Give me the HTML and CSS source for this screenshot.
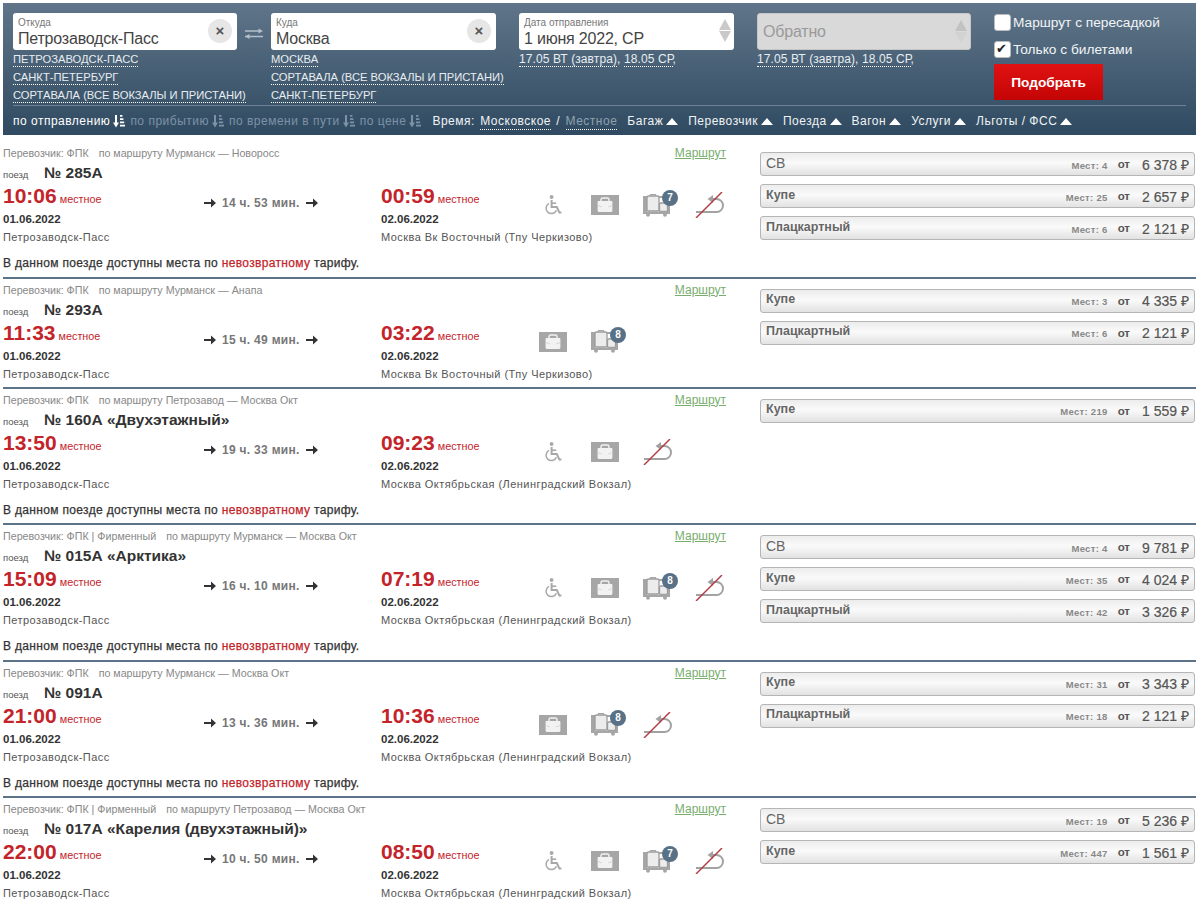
FILE: index.html
```html
<!DOCTYPE html>
<html lang="ru">
<head>
<meta charset="utf-8">
<title>Поезда</title>
<link rel="stylesheet" href="styles.css">
</head>
<body>
<svg class="defs" xmlns="http://www.w3.org/2000/svg">
  <symbol id="i-sort" viewBox="0 0 12 14"><path d="M3 1v9" stroke="currentColor" stroke-width="2" fill="none"/><path d="M0 8.600h6L3 13.400z" fill="currentColor"/><path d="M7 1h2.400v1.800H7zM7 4.200h3.400V6H7zM7 7.400h4.200v1.800H7zM7 10.800h5v1.800H7z" fill="currentColor"/></symbol>
  <symbol id="i-wheel" viewBox="0 0 18 20"><circle cx="7.600" cy="2" r="1.900" fill="#a8a8a8"/><path d="M7.600 5v7h5.200l2.600 5.600h2" fill="none" stroke="#a8a8a8" stroke-width="2"/><path d="M7.600 8.200h4.600" stroke="#a8a8a8" stroke-width="1.600"/><path d="M5 8.400a5.400 5.400 0 1 0 7.400 7" fill="none" stroke="#a8a8a8" stroke-width="1.500"/></symbol>
  <symbol id="i-bag" viewBox="0 0 28 20"><path d="M0 0h28v20H0z" fill="#a6a6a6"/><path d="M10 6V4.600C10 3.600 10.800 3 11.800 3h4.400c1 0 1.800.6 1.800 1.600V6" fill="none" stroke="#f2f2f2" stroke-width="1.400"/><path d="M6.600 7c0-.6.4-1 1-1h12.800c.6 0 1 .4 1 1v8.600c0 .8-.5 1.400-1.200 1.400H7.800c-.7 0-1.200-.6-1.200-1.400z" fill="#f2f2f2"/><path d="M7 10.600 10.800 12M21 10.600 17.200 12" stroke="#cfcfcf" stroke-width=".8"/></symbol>
  <symbol id="i-lug" viewBox="0 0 28 23"><rect x="0" y="2" width="4" height="16" fill="#a6a6a6"/><rect x="24" y="6" width="3" height="12" fill="#a6a6a6"/><rect x="0" y="2" width="20" height="2" fill="#a6a6a6"/><rect x="4" y="2" width="12" height="15" rx="1.500" fill="#ececec" stroke="#9c9c9c" stroke-width="1.300"/><path d="M7.500 2V0.600h5V2" fill="none" stroke="#a6a6a6" stroke-width="1.200"/><rect x="16.500" y="9" width="8" height="8.500" rx="1.200" fill="#ececec" stroke="#9c9c9c" stroke-width="1.300"/><rect x="0" y="17.500" width="27" height="2.500" fill="#a6a6a6"/><circle cx="5" cy="20.800" r="2" fill="#a6a6a6"/><circle cx="22" cy="20.800" r="2" fill="#a6a6a6"/></symbol>
  <symbol id="i-hook" viewBox="-2 0 30 26"><path d="M0 20h20.500a6.500 6.500 0 0 0 0-13h-5" fill="none" stroke="#a2a2a2" stroke-width="2"/><path d="M17 3 11.500 7l5.500 4z" fill="#a2a2a2"/><path d="M0 26 26 0" stroke="#b23a42" stroke-width="1.400"/></symbol>
  <symbol id="i-arrow" viewBox="0 0 12 10"><path d="M0 4h7V0.600L12 5 7 9.400V6H0z" fill="#333"/></symbol>
</svg>

<header class="search">
  <div class="fields">
    <div class="field field-from">
      <div class="input"><span class="input-label">Откуда</span><span class="input-value">Петрозаводск-Пасс</span><span class="clear">×</span></div>
      <a class="quick">ПЕТРОЗАВОДСК-ПАСС</a>
      <a class="quick">САНКТ-ПЕТЕРБУРГ</a>
      <a class="quick">СОРТАВАЛА (ВСЕ ВОКЗАЛЫ И ПРИСТАНИ)</a>
    </div>
    <svg class="swap" viewBox="0 0 18 11" width="18" height="11"><path d="M0 3h14M0 8.500h18" stroke="#b4c0ca" stroke-width="1.500" fill="none"/><path d="M13.500 0.500 18 3l-4.500 2.500zM4.500 6 0 8.500 4.500 11z" fill="#b4c0ca"/></svg>
    <div class="field field-to">
      <div class="input"><span class="input-label">Куда</span><span class="input-value">Москва</span><span class="clear">×</span></div>
      <a class="quick">МОСКВА</a>
      <a class="quick">СОРТАВАЛА (ВСЕ ВОКЗАЛЫ И ПРИСТАНИ)</a>
      <a class="quick">САНКТ-ПЕТЕРБУРГ</a>
    </div>
    <div class="field field-date">
      <div class="input"><span class="input-label">Дата отправления</span><span class="input-value">1 июня 2022, СР</span><span class="spin"><i class="up"></i><i class="down"></i></span></div>
      <div class="quick-dates"><a>17.05 ВТ (завтра)</a>, <a>18.05 СР</a>,</div>
    </div>
    <div class="field field-back">
      <div class="input input-off"><span class="input-value">Обратно</span><span class="spin spin-off"><i class="up"></i><i class="down"></i></span></div>
      <div class="quick-dates"><a>17.05 ВТ (завтра)</a>, <a>18.05 СР</a>,</div>
    </div>
    <div class="options">
      <label class="check"><input type="checkbox">Маршрут с пересадкой</label>
      <label class="check"><input type="checkbox" checked>Только с билетами</label>
      <button class="submit" type="button">Подобрать</button>
    </div>
  </div>
  <nav class="filters">
    <span class="sort on">по отправлению<svg width="12" height="14"><use href="#i-sort"/></svg></span>
    <span class="sort">по прибытию<svg width="12" height="14"><use href="#i-sort"/></svg></span>
    <span class="sort">по времени в пути<svg width="12" height="14"><use href="#i-sort"/></svg></span>
    <span class="sort">по цене<svg width="12" height="14"><use href="#i-sort"/></svg></span>
    <span class="tz">Время: <a class="tz-on">Московское</a> / <a class="tz-off">Местное</a></span>
    <span class="drop">Багаж<i></i></span>
    <span class="drop">Перевозчик<i></i></span>
    <span class="drop">Поезда<i></i></span>
    <span class="drop">Вагон<i></i></span>
    <span class="drop">Услуги<i></i></span>
    <span class="drop">Льготы / ФСС<i></i></span>
  </nav>
</header>

<main class="trains">

  <article class="train">
    <div class="info">
      <div class="carrier"><span>Перевозчик: ФПК<span class="via">по маршруту Мурманск — Новоросс</span></span><a class="route">Маршрут</a></div>
      <div class="num"><small>поезд</small><b>№ 285А</b></div>
      <div class="times">
        <div><div class="time">10:06<small>местное</small></div><div class="date">01.06.2022</div><div class="station">Петрозаводск-Пасс</div></div>
        <div class="dur"><svg width="12" height="10"><use href="#i-arrow"/></svg><span>14 ч. 53 мин.</span><svg width="12" height="10"><use href="#i-arrow"/></svg></div>
        <div><div class="time">00:59<small>местное</small></div><div class="date">02.06.2022</div><div class="station">Москва Вк Восточный (Тпу Черкизово)</div></div>
        <div class="icons">
          <span class="slot"><svg width="18" height="20"><use href="#i-wheel"/></svg></span>
          <span class="slot"><svg width="28" height="20"><use href="#i-bag"/></svg></span>
          <span class="slot"><svg width="28" height="23"><use href="#i-lug"/></svg><em class="badge">7</em></span>
          <span class="slot"><svg width="30" height="26"><use href="#i-hook"/></svg></span>
        </div>
      </div>
      <p class="note">В данном поезде доступны места по <span>невозвратному</span> тарифу.</p>
    </div>
    <div class="tickets">
      <div class="ticket"><span class="cls cls-thin">СВ</span><span class="seats">Мест: 4</span><span class="from">от</span><span class="price">6 378 ₽</span></div>
      <div class="ticket"><span class="cls">Купе</span><span class="seats">Мест: 25</span><span class="from">от</span><span class="price">2 657 ₽</span></div>
      <div class="ticket"><span class="cls">Плацкартный</span><span class="seats">Мест: 6</span><span class="from">от</span><span class="price">2 121 ₽</span></div>
    </div>
  </article>

  <article class="train">
    <div class="info">
      <div class="carrier"><span>Перевозчик: ФПК<span class="via">по маршруту Мурманск — Анапа</span></span><a class="route">Маршрут</a></div>
      <div class="num"><small>поезд</small><b>№ 293А</b></div>
      <div class="times">
        <div><div class="time">11:33<small>местное</small></div><div class="date">01.06.2022</div><div class="station">Петрозаводск-Пасс</div></div>
        <div class="dur"><svg width="12" height="10"><use href="#i-arrow"/></svg><span>15 ч. 49 мин.</span><svg width="12" height="10"><use href="#i-arrow"/></svg></div>
        <div><div class="time">03:22<small>местное</small></div><div class="date">02.06.2022</div><div class="station">Москва Вк Восточный (Тпу Черкизово)</div></div>
        <div class="icons">
          <span class="slot"><svg width="28" height="20"><use href="#i-bag"/></svg></span>
          <span class="slot"><svg width="28" height="23"><use href="#i-lug"/></svg><em class="badge">8</em></span>
        </div>
      </div>
    </div>
    <div class="tickets">
      <div class="ticket"><span class="cls">Купе</span><span class="seats">Мест: 3</span><span class="from">от</span><span class="price">4 335 ₽</span></div>
      <div class="ticket"><span class="cls">Плацкартный</span><span class="seats">Мест: 6</span><span class="from">от</span><span class="price">2 121 ₽</span></div>
    </div>
  </article>

  <article class="train">
    <div class="info">
      <div class="carrier"><span>Перевозчик: ФПК<span class="via">по маршруту Петрозавод — Москва Окт</span></span><a class="route">Маршрут</a></div>
      <div class="num"><small>поезд</small><b>№ 160А «Двухэтажный»</b></div>
      <div class="times">
        <div><div class="time">13:50<small>местное</small></div><div class="date">01.06.2022</div><div class="station">Петрозаводск-Пасс</div></div>
        <div class="dur"><svg width="12" height="10"><use href="#i-arrow"/></svg><span>19 ч. 33 мин.</span><svg width="12" height="10"><use href="#i-arrow"/></svg></div>
        <div><div class="time">09:23<small>местное</small></div><div class="date">02.06.2022</div><div class="station">Москва Октябрьская (Ленинградский Вокзал)</div></div>
        <div class="icons">
          <span class="slot"><svg width="18" height="20"><use href="#i-wheel"/></svg></span>
          <span class="slot"><svg width="28" height="20"><use href="#i-bag"/></svg></span>
          <span class="slot"><svg width="30" height="26"><use href="#i-hook"/></svg></span>
        </div>
      </div>
      <p class="note">В данном поезде доступны места по <span>невозвратному</span> тарифу.</p>
    </div>
    <div class="tickets">
      <div class="ticket"><span class="cls">Купе</span><span class="seats">Мест: 219</span><span class="from">от</span><span class="price">1 559 ₽</span></div>
    </div>
  </article>

  <article class="train">
    <div class="info">
      <div class="carrier"><span>Перевозчик: ФПК | Фирменный<span class="via">по маршруту Мурманск — Москва Окт</span></span><a class="route">Маршрут</a></div>
      <div class="num"><small>поезд</small><b>№ 015А «Арктика»</b></div>
      <div class="times">
        <div><div class="time">15:09<small>местное</small></div><div class="date">01.06.2022</div><div class="station">Петрозаводск-Пасс</div></div>
        <div class="dur"><svg width="12" height="10"><use href="#i-arrow"/></svg><span>16 ч. 10 мин.</span><svg width="12" height="10"><use href="#i-arrow"/></svg></div>
        <div><div class="time">07:19<small>местное</small></div><div class="date">02.06.2022</div><div class="station">Москва Октябрьская (Ленинградский Вокзал)</div></div>
        <div class="icons">
          <span class="slot"><svg width="18" height="20"><use href="#i-wheel"/></svg></span>
          <span class="slot"><svg width="28" height="20"><use href="#i-bag"/></svg></span>
          <span class="slot"><svg width="28" height="23"><use href="#i-lug"/></svg><em class="badge">8</em></span>
          <span class="slot"><svg width="30" height="26"><use href="#i-hook"/></svg></span>
        </div>
      </div>
      <p class="note">В данном поезде доступны места по <span>невозвратному</span> тарифу.</p>
    </div>
    <div class="tickets">
      <div class="ticket"><span class="cls cls-thin">СВ</span><span class="seats">Мест: 4</span><span class="from">от</span><span class="price">9 781 ₽</span></div>
      <div class="ticket"><span class="cls">Купе</span><span class="seats">Мест: 35</span><span class="from">от</span><span class="price">4 024 ₽</span></div>
      <div class="ticket"><span class="cls">Плацкартный</span><span class="seats">Мест: 42</span><span class="from">от</span><span class="price">3 326 ₽</span></div>
    </div>
  </article>

  <article class="train">
    <div class="info">
      <div class="carrier"><span>Перевозчик: ФПК<span class="via">по маршруту Мурманск — Москва Окт</span></span><a class="route">Маршрут</a></div>
      <div class="num"><small>поезд</small><b>№ 091А</b></div>
      <div class="times">
        <div><div class="time">21:00<small>местное</small></div><div class="date">01.06.2022</div><div class="station">Петрозаводск-Пасс</div></div>
        <div class="dur"><svg width="12" height="10"><use href="#i-arrow"/></svg><span>13 ч. 36 мин.</span><svg width="12" height="10"><use href="#i-arrow"/></svg></div>
        <div><div class="time">10:36<small>местное</small></div><div class="date">02.06.2022</div><div class="station">Москва Октябрьская (Ленинградский Вокзал)</div></div>
        <div class="icons">
          <span class="slot"><svg width="28" height="20"><use href="#i-bag"/></svg></span>
          <span class="slot"><svg width="28" height="23"><use href="#i-lug"/></svg><em class="badge">8</em></span>
          <span class="slot"><svg width="30" height="26"><use href="#i-hook"/></svg></span>
        </div>
      </div>
      <p class="note">В данном поезде доступны места по <span>невозвратному</span> тарифу.</p>
    </div>
    <div class="tickets">
      <div class="ticket"><span class="cls">Купе</span><span class="seats">Мест: 31</span><span class="from">от</span><span class="price">3 343 ₽</span></div>
      <div class="ticket"><span class="cls">Плацкартный</span><span class="seats">Мест: 18</span><span class="from">от</span><span class="price">2 121 ₽</span></div>
    </div>
  </article>

  <article class="train train-last">
    <div class="info">
      <div class="carrier"><span>Перевозчик: ФПК | Фирменный<span class="via">по маршруту Петрозавод — Москва Окт</span></span><a class="route">Маршрут</a></div>
      <div class="num"><small>поезд</small><b>№ 017А «Карелия (двухэтажный)»</b></div>
      <div class="times">
        <div><div class="time">22:00<small>местное</small></div><div class="date">01.06.2022</div><div class="station">Петрозаводск-Пасс</div></div>
        <div class="dur"><svg width="12" height="10"><use href="#i-arrow"/></svg><span>10 ч. 50 мин.</span><svg width="12" height="10"><use href="#i-arrow"/></svg></div>
        <div><div class="time">08:50<small>местное</small></div><div class="date">02.06.2022</div><div class="station">Москва Октябрьская (Ленинградский Вокзал)</div></div>
        <div class="icons">
          <span class="slot"><svg width="18" height="20"><use href="#i-wheel"/></svg></span>
          <span class="slot"><svg width="28" height="20"><use href="#i-bag"/></svg></span>
          <span class="slot"><svg width="28" height="23"><use href="#i-lug"/></svg><em class="badge">7</em></span>
          <span class="slot"><svg width="30" height="26"><use href="#i-hook"/></svg></span>
        </div>
      </div>
    </div>
    <div class="tickets">
      <div class="ticket"><span class="cls cls-thin">СВ</span><span class="seats">Мест: 19</span><span class="from">от</span><span class="price">5 236 ₽</span></div>
      <div class="ticket"><span class="cls">Купе</span><span class="seats">Мест: 447</span><span class="from">от</span><span class="price">1 561 ₽</span></div>
    </div>
  </article>

</main>
</body>
</html>
```

FILE: styles.css
```css
* { box-sizing: border-box; }
html, body { margin: 0; padding: 0; background: #fff; }
body {
  padding: 3px 4px 0 3px;
  font-family: "Liberation Sans", Arial, sans-serif;
  color: #333;
  height: 904px;
  overflow: hidden;
}
.defs { display: none; }

/* search panel */
.search {
  height: 132px;
  padding: 10px 10px 0;
  background: linear-gradient(#607589, #2f4a61);
  color: #fff;
}
.fields { display: flex; height: 93px; border-bottom: 1px solid #6b8093; align-items: flex-start; }
.field-from { width: 224px; }
.field-to { width: 225px; margin-right: 23px; }
.field-date { width: 215px; margin-right: 23px; }
.field-back { width: 214px; margin-right: 23px; }
.swap { margin: 15px 8px 0; flex: none; }
.input {
  position: relative;
  height: 37px;
  background: #fff;
  border-radius: 3px;
  padding: 4px 5px 0;
  color: #444;
}
.input-label { display: block; font-size: 10px; line-height: 12px; color: #777; }
.input-value { display: block; font-size: 16px; line-height: 19px; letter-spacing: -.2px; }
.input-off { background: #d9d9d9; padding-top: 8px; border: 1px solid #c6c6c6; }
.input-off .input-value { color: #999; }
.clear {
  position: absolute;
  right: 5px;
  top: 6px;
  width: 24px;
  height: 24px;
  border-radius: 50%;
  background: #e6e6e6;
  color: #555;
  font-size: 15px;
  font-weight: bold;
  line-height: 23px;
  text-align: center;
}
.spin { position: absolute; right: 3px; top: 6px; display: flex; flex-direction: column; gap: 1px; }
.spin i { display: block; width: 0; height: 0; border: 6px solid transparent; }
.spin .up { border-top: 0; border-bottom: 11px solid #c9c9c9; }
.spin .down { border-bottom: 0; border-top: 11px solid #c9c9c9; }
.spin-off .up { border-bottom-color: #c2c2c2; }
.spin-off .down { border-top-color: #d2d2d2; }
.quick {
  display: table;
  font-size: 11.2px;
  line-height: 14px;
  margin-top: 3px;
  color: #e8edf1;
  border-bottom: 1px dotted #fff;
  white-space: nowrap;
}
.field .input + .quick { margin-top: 2px; }
.quick-dates { font-size: 12px; letter-spacing: .1px; line-height: 14px; margin-top: 2px; color: #e8edf1; white-space: nowrap; }
.quick-dates a { border-bottom: 1px dotted #fff; }
.options { display: flex; flex-direction: column; align-items: flex-start; }
.check { display: flex; align-items: center; height: 18px; margin-bottom: 9px; font-size: 13.7px; color: #f2f5f7; }
.check input {
  appearance: none;
  width: 17px;
  height: 17px;
  margin: 0 2px 0 0;
  background: #fff;
  border: 1px solid #bbb;
  border-radius: 3px;
  position: relative;
}
.check input:checked::after {
  content: "✔";
  position: absolute;
  left: 1px;
  top: -1px;
  font-size: 13px;
  line-height: 16px;
  color: #222;
}
.submit {
  margin-top: -3px;
  width: 109px;
  height: 36px;
  border: 0;
  background: linear-gradient(#e01212, #c40505);
  color: #fff;
  font: bold 13.7px "Liberation Sans", Arial, sans-serif;
}
.filters { display: flex; align-items: center; height: 28px; padding-top: 2px; font-size: 12px; letter-spacing: .5px; white-space: nowrap; }
.filters svg { flex: none; margin-left: 3px; }
.sort { display: flex; align-items: center; margin-right: 5px; color: #7d92a6; }
.sort.on { color: #fff; }
.tz { margin: 0 10px 0 6px; color: #f0f3f5; word-spacing: 1.5px; }
.tz a { padding-bottom: 1px; border-bottom: 1px dotted #fff; }
.tz-off { color: #8fa2b0; }
.drop { display: flex; align-items: center; margin-right: 10px; color: #f0f3f5; }
.drop i { width: 0; height: 0; margin-left: 3px; border: 6px solid transparent; border-top: 0; border-bottom: 7px solid #fff; }

/* train rows */
.trains { padding-top: 7px; }
.train { display: flex; height: 136.5px; border-bottom: 2px solid #5d7387; }
.train:nth-child(2) { height: 110px; }
.train-last { border-bottom: 0; }
.info { width: 723px; flex: none; }
.carrier { display: flex; justify-content: space-between; height: 22px; padding-top: 5px; font-size: 10.7px; line-height: 13px; color: #888; }
.via { margin-left: 10px; }
.route { font-size: 12px; color: #79ad6d; text-decoration: underline; line-height: 12px; }
.num { display: flex; align-items: center; height: 18px; }
.num small { width: 41px; font-size: 9.5px; color: #555; padding-top: 3px; }
.num b { font-size: 15.5px; color: #333; }
.times { display: grid; grid-template-columns: 201px 177px 146px auto; margin-top: 1px; }
.time { height: 28px; line-height: 26px; font-size: 21px; font-weight: bold; color: #c3242a; white-space: nowrap; }
.time small { margin-left: 3px; font-size: 10.8px; font-weight: normal; }
.date { height: 16px; line-height: 16px; font-size: 11.5px; font-weight: bold; color: #333; }
.station { margin-top: 2px; height: 16px; line-height: 16px; font-size: 11px; color: #555; letter-spacing: .45px; white-space: nowrap; }
.dur { display: flex; align-items: center; gap: 6px; height: 20px; margin-top: 10px; width: 114px; font-size: 12px; font-weight: bold; letter-spacing: .3px; color: #777; white-space: nowrap; }
.icons { display: flex; margin-top: 7px; }
.slot { position: relative; display: flex; align-items: center; justify-content: center; width: 52px; height: 30px; }
.badge {
  position: absolute;
  left: 31px;
  top: 0;
  width: 16px;
  height: 16px;
  border-radius: 50%;
  background: #587186;
  color: #fff;
  font-size: 10px;
  font-style: normal;
  font-weight: bold;
  line-height: 16px;
  text-align: center;
}
.note { margin: 10px 0 0; font-size: 12px; line-height: 16px; letter-spacing: .33px; -webkit-text-stroke: .25px currentColor; color: #333; white-space: nowrap; }
.note span { color: #c3242a; }
.tickets { width: 435px; margin-left: 34px; padding-top: 10px; display: flex; flex-direction: column; gap: 8px; }
.ticket {
  display: flex;
  align-items: center;
  height: 24px;
  padding: 0 5px;
  border: 1px solid #b5b5b5;
  border-radius: 3px;
  background: linear-gradient(#ececec, #fafafa 45%, #e2e2e2);
  color: #666;
  white-space: nowrap;
}
.cls { flex: 1; font-size: 12.5px; font-weight: bold; padding-bottom: 3px; }
.cls-thin { font-weight: normal; font-size: 14px; }
.seats { font-size: 9.5px; font-weight: bold; color: #888; padding-top: 2px; letter-spacing: .3px; }
.from { margin-left: 10px; font-size: 11.5px; font-weight: bold; color: #555; }
.price { width: 59px; text-align: right; font-size: 14px; color: #555; -webkit-text-stroke: .2px currentColor; }
```
